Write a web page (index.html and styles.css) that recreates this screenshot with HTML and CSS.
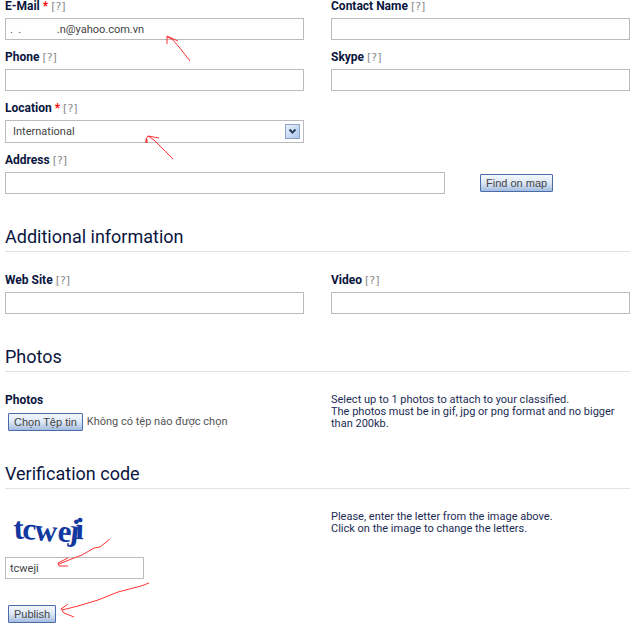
FILE: index.html
```
<!DOCTYPE html>
<html lang="en">
<head>
    <meta charset="UTF-8">
    <meta name="viewport" content="width=device-width, initial-scale=1.0">
    <title>Publish classified</title>
    <link rel="stylesheet" href="styles.css">
</head>
<body>
    <form class="classified">
        <!-- Contact details -->
        <div class="row">
            <div class="field">
                <div class="caption"><label for="email">E-Mail <span class="required">*</span></label> <a href="#">[?]</a></div>
                <input type="text" id="email" value=".  .             .n@yahoo.com.vn">
                <svg class="arrow arrow-email" width="26" height="28" viewBox="0 0 26 28"><path d="M1 9V1L12 6M1 2L6 4L13 12L24 26"/></svg>
            </div>
            <div class="field">
                <div class="caption"><label for="contact">Contact Name</label> <a href="#">[?]</a></div>
                <input type="text" id="contact">
            </div>
        </div>
        <div class="row">
            <div class="field">
                <div class="caption"><label for="phone">Phone</label> <a href="#">[?]</a></div>
                <input type="text" id="phone">
            </div>
            <div class="field">
                <div class="caption"><label for="skype">Skype</label> <a href="#">[?]</a></div>
                <input type="text" id="skype">
            </div>
        </div>
        <div class="row">
            <div class="field">
                <div class="caption"><label for="location">Location <span class="required">*</span></label> <a href="#">[?]</a></div>
                <div class="select">
                    <select id="location">
                        <option>International</option>
                    </select>
                    <svg class="drop" width="15" height="15" viewBox="0 0 15 15">
                        <defs><linearGradient id="drop-fill" x1="0" y1="0" x2="1" y2="1"><stop offset="0" stop-color="#edf4fd"/><stop offset="1" stop-color="#a9c4ea"/></linearGradient></defs>
                        <rect x=".5" y=".5" width="14" height="14" fill="url(#drop-fill)" stroke="#8ba4c8"/>
                        <path d="M4.500 5.500L7.500 8.500L10.500 5.500" fill="none" stroke="#2c3e5e" stroke-width="2"/>
                    </svg>
                </div>
                <svg class="arrow arrow-location" width="29" height="26" viewBox="0 0 29 26"><path d="M3 1L14 3M3 1L9 5L28 24"/><path class="thick" d="M1.500 4V8"/><path d="M1 4L3 1"/></svg>
            </div>
        </div>
        <div class="field">
            <div class="caption"><label for="address">Address</label> <a href="#">[?]</a></div>
            <div class="address">
                <input type="text" id="address">
                <button type="button" class="button">Find on map</button>
            </div>
        </div>

        <h2>Additional information</h2>
        <div class="row">
            <div class="field">
                <div class="caption"><label for="website">Web Site</label> <a href="#">[?]</a></div>
                <input type="text" id="website">
            </div>
            <div class="field">
                <div class="caption"><label for="video">Video</label> <a href="#">[?]</a></div>
                <input type="text" id="video">
            </div>
        </div>

        <h2>Photos</h2>
        <div class="row">
            <div class="field">
                <div class="caption"><label for="photos">Photos</label></div>
                <div class="file">
                    <input type="file" id="photos">
                    <label for="photos" class="button">Chọn Tệp tin</label>
                    <span>Không có tệp nào được chọn</span>
                </div>
            </div>
            <p class="help">Select up to 1 photos to attach to your classified.<br>The photos must be in gif, jpg or png format and no bigger than 200kb.</p>
        </div>

        <h2>Verification code</h2>
        <div class="row">
            <div class="field">
                <button type="button" class="captcha" aria-label="Change the letters">
                    <svg width="90" height="46" viewBox="0 0 90 46"><text x="9 17 29 52 63 70" y="28 28 29 30 29 28" rotate="-3 3 5 5 7 2">tcweji</text></svg>
                </button>
                <input type="text" class="code" aria-label="Verification code" value="tcweji">
                <svg class="arrow arrow-code" width="54" height="29" viewBox="0 0 54 29"><path d="M53 1L43 9L37 10L25 17L17 20L2 26M11 20L1 25L2 28L11 28"/></svg>
            </div>
            <p class="help">Please, enter the letter from the image above.<br>Click on the image to change the letters.</p>
        </div>

        <div class="publish">
            <button type="submit" class="button">Publish</button>
            <svg class="arrow arrow-publish" width="90" height="37" viewBox="0 0 90 37"><path d="M89 1L81 4L58 10L38 18L18 24L2 28M8 22L1 27L4 31L14 35"/></svg>
        </div>
    </form>
</body>
</html>
```
FILE: styles.css
```
* {
    margin: 0;
    padding: 0;
    box-sizing: border-box;
}

body {
    color: #1c2c55;
    font: 11px/12px Roboto, sans-serif;
    background: #fff;
}

.classified {
    padding: 0 10px 12px 5px;
}

.row {
    display: grid;
    grid-template-columns: 1fr 1fr;
    gap: 27px;
    margin-bottom: 11px;
}

.field {
    position: relative;
}

.caption {
    height: 12px;
    margin-bottom: 6px;
    color: #0a1640;
    font-size: 12px;
    font-weight: 700;
    white-space: nowrap;
}

.caption a {
    color: #888;
    font: 11px/12px "DejaVu Sans", sans-serif;
    text-decoration: none;
}

.required {
    color: #f00;
}

input[type="text"],
select {
    display: block;
    width: 100%;
    height: 22px;
    padding: 0 4px;
    border: 1px solid #bbb;
    border-radius: 0;
    outline: 0;
    background: #fff;
    color: #444;
    font: inherit;
}

.select {
    position: relative;
}

select {
    height: 23px;
    padding: 0 24px 0 7px;
    appearance: none;
}

.drop {
    position: absolute;
    top: 4px;
    right: 4px;
    pointer-events: none;
}

.address {
    display: grid;
    grid-template-columns: 1fr 150px;
    gap: 35px;
    align-items: center;
    justify-items: start;
}

.button {
    height: 18px;
    padding: 0 5px;
    border: 1px solid #4a6ca8;
    border-radius: 1px;
    background: linear-gradient(#f4f8fd, #dce7f5 50%, #a4bcdf);
    color: #444;
    font: 11px/16px "Liberation Sans", sans-serif;
    white-space: nowrap;
    cursor: pointer;
}

h2 {
    margin: 31px 0 22px;
    padding-bottom: 2px;
    border-bottom: 1px solid #e2e2e2;
    color: #0a1640;
    font: 400 18px/24px Roboto, sans-serif;
}

.file {
    position: relative;
    display: flex;
    align-items: center;
    gap: 4px;
    height: 19px;
    padding-left: 3px;
    color: #555;
    white-space: nowrap;
}

.file input {
    position: absolute;
    width: 74px;
    height: 18px;
    opacity: 0;
}

.captcha {
    display: block;
    height: 46px;
    border: 0;
    background: none;
    cursor: pointer;
}

.captcha text {
    fill: #1238a0;
    font: bold 31px "Liberation Serif", serif;
}

input.code {
    width: 139px;
}

.publish {
    position: relative;
    margin-top: 26px;
    padding-left: 3px;
}

/* Hand drawn pointers */
.arrow {
    position: absolute;
    fill: none;
    stroke: #f33;
    stroke-width: 1;
    pointer-events: none;
}

.arrow .thick {
    stroke-width: 2;
}

.arrow-email {
    left: 161px;
    top: 35px;
}

.arrow-location {
    left: 140px;
    top: 33px;
}

.arrow-code {
    left: 52px;
    top: 27px;
}

.arrow-publish {
    left: 55px;
    top: -23px;
}
```
